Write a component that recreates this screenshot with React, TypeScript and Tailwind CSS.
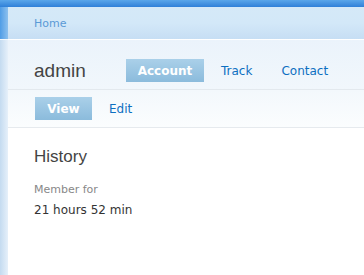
export default function App() {
  return (
    <div className="flex h-[275px] w-full flex-col overflow-hidden bg-white font-['DejaVu_Sans',Verdana,sans-serif]">
      <div className="h-[7px] w-full bg-gradient-to-b from-[#5aa6ea] to-[#2f80d8]" />
      <div className="flex flex-1">
        <div className="flex w-[8px] flex-col">
          <div className="h-[32px] bg-gradient-to-r from-[#4f9de6] to-[#8cc0ee]" />
          <div className="h-px bg-[#f4f9fd]" />
          <div className="flex-1 bg-gradient-to-r from-[#c4dbf0] to-[#e6f0fa]" />
        </div>
        <div className="flex flex-1 flex-col">
          <div className="flex h-[32px] items-center bg-gradient-to-b from-[#d5e9f8] via-[#d3e8f8] to-[#c6def4] pl-[26px]">
            <a className="text-[11px] leading-none text-[#5b9ad6]">Home</a>
          </div>
          <div className="h-px bg-white" />
          <div className="flex h-[49px] items-center bg-gradient-to-b from-[#ebf3fb] to-[#f1f7fc] pl-[26px] pt-[12px]">
            <h1 className="w-[92px] font-['Liberation_Sans',Arial,sans-serif] text-[19px] leading-none text-[#444]">
              admin
            </h1>
            <span className="flex h-[23px] w-[78px] items-center justify-center bg-gradient-to-b from-[#aad0e9] to-[#8bbbdc] text-[12px] font-bold text-white">
              Account
            </span>
            <a className="ml-[17px] text-[12px] text-[#0d6fc1]">Track</a>
            <a className="ml-[29px] text-[12px] text-[#0d6fc1]">Contact</a>
          </div>
          <div className="h-px bg-[#e3e9ee]" />
          <div className="flex h-[37px] items-center bg-gradient-to-b from-[#f3f8fc] to-[#fbfdfe] pl-[27px]">
            <span className="flex h-[23px] w-[57px] items-center justify-center bg-gradient-to-b from-[#aad0e9] to-[#8bbbdc] text-[12px] font-bold text-white">
              View
            </span>
            <a className="ml-[17px] text-[12px] text-[#0d6fc1]">Edit</a>
          </div>
          <div className="h-px bg-[#e6eaee]" />
          <div className="flex-1 bg-white pl-[26px] pt-[19px]">
            <h2 className="font-['Liberation_Sans',Arial,sans-serif] text-[17px] leading-[20px] text-[#444]">
              History
            </h2>
            <div className="mt-[16px] text-[11px] leading-[14px] text-[#888]">Member for</div>
            <div className="mt-[6px] text-[12px] leading-[15px] text-[#333]">21 hours 52 min</div>
          </div>
        </div>
      </div>
    </div>
  );
}
